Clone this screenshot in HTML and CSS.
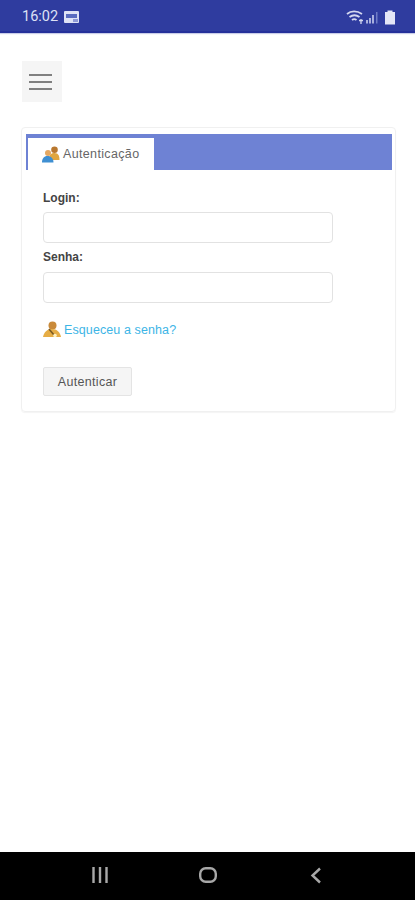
FILE: index.html
```html
<!DOCTYPE html>
<html lang="pt-BR">
  <head>
    <meta charset="utf-8" />
    <meta name="viewport" content="width=device-width,initial-scale=1.0" />
    <title>Autenticação</title>
    <link rel="stylesheet" href="styles.css">
  </head>
  <body>
    <header class="StatusBar">
      <div class="StatusLeft">
        <span class="Clock">16:02</span>
        <svg class="StatusIcon" width="15" height="12" viewBox="0 0 15 12">
          <rect width="15" height="12" rx="1" fill="#dfe3f5"/>
          <rect x="2" y="3" width="11" height="4" fill="#5a6cc0"/>
          <rect x="9" y="8" width="5" height="3" fill="#8f9ad6"/>
        </svg>
      </div>
      <div class="StatusRight">
        <svg width="50" height="16" viewBox="0 0 50 16">
          <g fill="none" stroke="#d5d9f0" stroke-width="1.800">
            <path d="M2 5C6 1.500 12 1.500 17 5"/>
            <path d="M4.500 8C8 5.500 11 5.500 14.500 8"/>
            <path d="M7 11C8.500 9.800 10 9.800 11.500 11"/>
          </g>
          <path d="M14 11.500h4M16 10v5" stroke="#d5d9f0" stroke-width="1.300"/>
          <rect x="21" y="11" width="2" height="3.500" fill="#a9b0de"/>
          <rect x="24" y="9" width="2" height="5.500" fill="#a9b0de"/>
          <rect x="27" y="6" width="2" height="8.500" fill="#a9b0de"/>
          <rect x="31" y="3" width="1.500" height="11.500" fill="#6f7cc6"/>
          <path d="M40 3h2.500V1.500h5V3H50v12.500H40z" fill="#e4e6f6"/>
        </svg>
      </div>
    </header>

    <main class="Content">
      <button class="MenuButton" type="button" title="Menu">
        <span></span><span></span><span></span>
      </button>

      <section class="Card">
        <div class="TabStrip">
          <div class="Tab">
            <svg width="18" height="17" viewBox="0 0 18 17">
              <circle cx="12.500" cy="3.800" r="3.300" fill="#b9782f"/>
              <path d="M7 14c0-5 1.500-7 5.500-7s5 3 5 7z" fill="#e0a63f"/>
              <circle cx="6" cy="7" r="3" fill="#e5a862"/>
              <path d="M0 16.500c0-4 2-6.500 5.500-6.500s6 2.500 6 6.500z" fill="#3f8fd2"/>
            </svg>
            <span>Autenticação</span>
          </div>
        </div>

        <form class="LoginForm" action="">
          <label class="FieldLabel" for="login">Login:</label>
          <input class="FieldInput" id="login" autocomplete="off" />
          <label class="FieldLabel" for="senha">Senha:</label>
          <input class="FieldInput" id="senha" type="password" />

          <div class="Forgot">
            <svg width="18" height="17" viewBox="0 0 18 17">
              <circle cx="9.500" cy="4.500" r="4" fill="#c98a3a"/>
              <path d="M0 16c1-5 4-8 9-8s8 3 9 8z" fill="#e6ad45"/>
              <path d="M6 8l5 6" stroke="#7a5a22" stroke-width="1.600"/>
              <circle cx="12" cy="14.500" r="1.800" fill="#fff2c4"/>
            </svg>
            <a href="#">Esqueceu a senha?</a>
          </div>

          <button class="SubmitButton" type="submit">Autenticar</button>
        </form>
      </section>
    </main>

    <footer class="NavBar">
      <svg width="18" height="16" viewBox="0 0 18 16">
        <path d="M2.500 0v16M9 0v16M15.500 0v16" stroke="#a8a8a8" stroke-width="2.400"/>
      </svg>
      <svg width="18" height="16" viewBox="0 0 18 16">
        <rect x="1.200" y="1.200" width="15.600" height="13.600" rx="5.500" fill="none" stroke="#a8a8a8" stroke-width="2.400"/>
      </svg>
      <svg width="18" height="17" viewBox="0 0 18 17">
        <path d="M13 1.500L5.500 8.500l7.500 7" fill="none" stroke="#a8a8a8" stroke-width="2.400"/>
      </svg>
    </footer>
  </body>
</html>
```

FILE: styles.css
```css
* {
  box-sizing: border-box;
}

body {
  margin: 0;
  height: 900px;
  display: flex;
  flex-direction: column;
  background: #fff;
  overflow: hidden;
  font-family: "Liberation Sans", Arial, sans-serif;
}

.StatusBar {
  height: 33px;
  padding: 2px 20px 0 22px;
  display: flex;
  justify-content: space-between;
  align-items: center;
  background: #2f3c9f;
  border-bottom: 2px solid #25309a;
  box-shadow: 0 1px 1px #c9cde8;
}
.StatusLeft {
  display: flex;
  align-items: center;
  gap: 6px;
}
.StatusRight {
  display: flex;
  align-items: center;
}
.Clock {
  color: #dde1f5;
  font-family: Roboto, sans-serif;
  font-size: 14.500px;
}

.Content {
  flex-grow: 1;
  padding: 28px 19px 0 21px;
}

.MenuButton {
  width: 40px;
  height: 41px;
  margin-left: 1px;
  padding: 0 10px 0 7px;
  display: flex;
  flex-direction: column;
  justify-content: center;
  gap: 5px;
  background: #f5f5f5;
  border: none;
}
.MenuButton span {
  display: block;
  height: 2px;
  background: #808080;
}

.Card {
  height: 285px;
  margin-top: 25px;
  padding: 6px 3px 0 4px;
  border: 1px solid #f0f0f0;
  border-radius: 4px;
  box-shadow: 0 1px 1px #f4f4f4;
}

.TabStrip {
  height: 36px;
  padding: 4px 0 0 2px;
  background: #6e82d4;
}
.Tab {
  width: 126px;
  height: 32px;
  padding-left: 14px;
  display: flex;
  align-items: center;
  gap: 3px;
  background: #fff;
  color: #666;
  font-size: 12.500px;
  letter-spacing: 0.350px;
}

.LoginForm {
  padding: 21px 0 0 17px;
  display: flex;
  flex-direction: column;
  align-items: flex-start;
}

.FieldLabel {
  height: 15px;
  margin-bottom: 6px;
  color: #444;
  font-size: 12px;
  font-weight: bold;
  line-height: 15px;
}
.FieldInput + .FieldLabel {
  margin-top: -1px;
  margin-bottom: 7px;
}

.FieldInput {
  width: 290px;
  height: 31px;
  margin-bottom: 8px;
  background: #fff;
  border: 1px solid #e2e2e2;
  border-radius: 4px;
}

.Forgot {
  margin-top: 10px;
  display: flex;
  align-items: center;
  gap: 3px;
}
.Forgot a {
  color: #3db5e6;
  font-size: 12.500px;
  letter-spacing: 0.100px;
  text-decoration: none;
}

.SubmitButton {
  width: 89px;
  height: 29px;
  margin-top: 29px;
  padding: 0;
  background: #f5f5f5;
  border: 1px solid #e4e4e4;
  border-radius: 2px;
  color: #555;
  font-family: inherit;
  font-size: 12.500px;
  letter-spacing: 0.300px;
}

.NavBar {
  height: 48px;
  padding: 0 90px 2px 91px;
  display: flex;
  justify-content: space-between;
  align-items: center;
  background: #000;
}
```
